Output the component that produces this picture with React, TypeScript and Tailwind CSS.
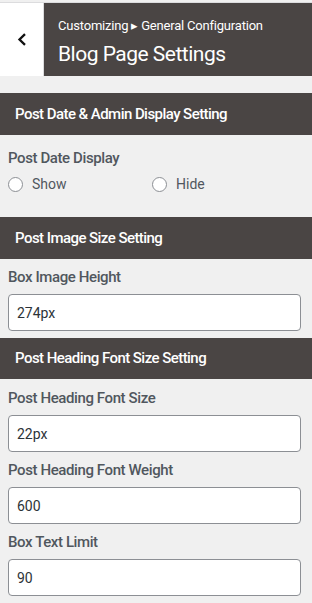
import { useState } from "react";

function SectionHeader({ title, h = "h-[42px]" }: { title: string; h?: string }) {
  return (
    <div className={`${h} bg-[#4a4544] flex items-center px-[15px]`}>
      <span className="text-white text-[15px] font-medium tracking-[-0.55px]">{title}</span>
    </div>
  );
}

function Field({ label, value }: { label: string; value: string }) {
  const [val, setVal] = useState(value);
  return (
    <div className="flex flex-col">
      <label className="text-[15px] leading-5 font-medium text-[#50575e] tracking-[-0.4px] mb-[7px]">{label}</label>
      <input
        type="text"
        value={val}
        onChange={e => setVal(e.target.value)}
        className="h-[37px] w-[293px] bg-white border border-[#8c8f94] rounded-[4px] px-[8px] text-[14px] text-[#2c3338] outline-none"
      />
    </div>
  );
}

export default function App() {
  const [show, setShow] = useState("");
  return (
    <div className="w-[312px] h-[603px] bg-[#f0f0f0] overflow-hidden" style={{ fontFamily: "Roboto, 'Liberation Sans', sans-serif" }}>
      <div className="h-[3px] border-b border-[#dcdcde]" />
      <div className="flex h-[73px]">
        <button className="w-[44px] bg-white border-r border-[#dcdcde] flex items-center justify-center">
          <svg width="10" height="13" viewBox="0 0 10 13">
            <path d="M8 1.2 L2.5 6.5 L8 11.8" fill="none" stroke="#111" strokeWidth="2.3" />
          </svg>
        </button>
        <div className="flex-1 bg-[#4a4544] pl-[14px] pt-[15px] text-white">
          <div className="text-[13px] leading-4 tracking-[-0.2px]">Customizing ▸ General Configuration</div>
          <div className="text-[21px] leading-7 mt-[6px] tracking-[-0.5px]">Blog Page Settings</div>
        </div>
      </div>

      <div className="mt-[17px]">
        <SectionHeader title="Post Date & Admin Display Setting" />
        <div className="px-2 pt-[13px] h-[82px]">
          <div className="text-[15px] leading-5 font-medium text-[#50575e] tracking-[-0.4px]">Post Date Display</div>
          <div className="flex mt-[6px]">
            <label className="flex items-center w-[144px] gap-[9px] cursor-pointer">
              <input type="radio" name="pd" checked={show === "show"} onChange={() => setShow("show")} className="appearance-none w-[15px] h-[15px] rounded-full border border-[#8c8f94] bg-white" />
              <span className="text-[14px] text-[#50575e]">Show</span>
            </label>
            <label className="flex items-center gap-[9px] cursor-pointer">
              <input type="radio" name="pd" checked={show === "hide"} onChange={() => setShow("hide")} className="appearance-none w-[15px] h-[15px] rounded-full border border-[#8c8f94] bg-white" />
              <span className="text-[14px] text-[#50575e]">Hide</span>
            </label>
          </div>
        </div>

        <SectionHeader title="Post Image Size Setting" />
        <div className="px-2 pt-[8px] pb-[7px]">
          <Field label="Box Image Height" value="274px" />
        </div>

        <SectionHeader title="Post Heading Font Size Setting" h="h-[41px]" />
        <div className="px-2 pt-[9px] flex flex-col gap-[8px]">
          <Field label="Post Heading Font Size" value="22px" />
          <Field label="Post Heading Font Weight" value="600" />
          <Field label="Box Text Limit" value="90" />
        </div>
      </div>
    </div>
  );
}
